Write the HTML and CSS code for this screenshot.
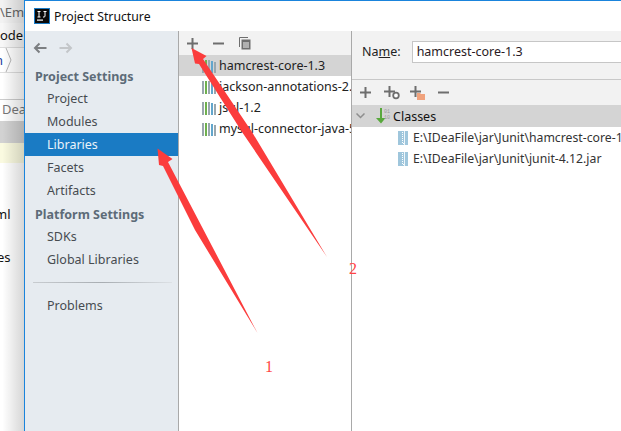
FILE: index.html
```html
<!DOCTYPE html>
<html lang="en">
<head>
<meta charset="utf-8">
<title>Project Structure</title>
<link rel="stylesheet" href="styles.css">
</head>
<body>
<svg class="defs" width="0" height="0" aria-hidden="true">
  <symbol id="lib" viewBox="0 0 14 14">
    <rect x="0" y="1" width="2" height="13" fill="#9aa7ae"/>
    <rect x="3" y="1" width="2" height="13" fill="#6fb04f"/>
    <rect x="6" y="1" width="2" height="13" fill="#9aa7ae"/>
    <rect x="9" y="2" width="2" height="12" fill="#62a6cc"/>
    <rect x="12" y="3" width="2" height="11" fill="#9aa7ae"/>
  </symbol>
  <symbol id="jar" viewBox="0 0 10 14">
    <rect x="0" y="0" width="10" height="14" fill="#9fc6dc"/>
    <path d="M5 0v1h-1v1h1v1h-1v1h1v1h-1v1h1v1h-1v1h1v1h-1v1h1v1h-1v1h1v1h1v-1h-1z" fill="#fff"/>
    <rect x="6" y="0" width="1" height="14" fill="#eef6fa"/>
  </symbol>
</svg>
<div class="page">
  <aside class="backdrop">
    <div class="bd-path">\Em</div>
    <div class="bd-menu">ode</div>
    <div class="bd-crumb"><span class="bd-n">n</span><svg class="bd-chev" width="8" height="24" viewBox="0 0 8 24"><path d="M1 0l5 12-5 12" fill="none" stroke="#b5b5b5"/></svg></div>
    <div class="bd-gap"></div>
    <div class="bd-dea">Dea</div>
    <div class="bd-gray"></div>
    <div class="bd-yellow"></div>
    <div class="bd-ml">ml</div>
    <div class="bd-es">es</div>
  </aside>
  <main class="window">
    <header class="titlebar">
      <svg class="logo" width="16" height="16" viewBox="0 0 16 16"><rect x=".5" y=".5" width="15" height="15" fill="#0a0a0a" stroke="#1a7ac4"/><rect x="3" y="11.500" width="6" height="1.200" fill="#fff"/><path d="M3.500 3.500h3M5 3.500v5.500M3.500 9h3M9.500 3.500h3M11 3.500v4.500q0 1-1 1h-1" fill="none" stroke="#fff" stroke-width="1"/></svg>
      <span class="title">Project Structure</span>
    </header>
    <div class="panes">
      <nav class="sidebar">
        <div class="navbtns">
          <svg width="14" height="12" viewBox="0 0 14 12"><path d="M13.500 6H2M6.500 1.500L2 6l4.500 4.500" fill="none" stroke="#7c7f82" stroke-width="2"/></svg>
          <svg width="14" height="12" viewBox="0 0 14 12"><path d="M0.500 6H12M7.500 1.500L12 6l-4.500 4.500" fill="none" stroke="#c3c6c9" stroke-width="2"/></svg>
        </div>
        <div class="group">Project Settings</div>
        <div class="item">Project</div>
        <div class="item">Modules</div>
        <div class="item active">Libraries</div>
        <div class="item">Facets</div>
        <div class="item">Artifacts</div>
        <div class="group">Platform Settings</div>
        <div class="item">SDKs</div>
        <div class="item">Global Libraries</div>
        <div class="sep"></div>
        <div class="item">Problems</div>
      </nav>
      <section class="middle">
        <div class="toolbar midtools">
          <svg width="11" height="11" viewBox="0 0 11 11"><path d="M5.500 0v11M0 5.500h11" stroke="#6e6e6e" stroke-width="2"/></svg>
          <svg width="11" height="11" viewBox="0 0 11 11"><path d="M0 5.500h11" stroke="#6e6e6e" stroke-width="2"/></svg>
          <svg width="12" height="13" viewBox="0 0 12 13"><path d="M0.500 10V0.500H9" fill="none" stroke="#6e6e6e"/><rect x="2.500" y="2.500" width="9" height="10" fill="#6e6e6e"/><path d="M4 6h6M4 8h6M4 10h6" stroke="#f2f2f2"/></svg>
        </div>
        <ul class="liblist">
          <li class="lib selected"><svg class="libicon"><use href="#lib"/></svg>hamcrest-core-1.3</li>
          <li class="lib"><svg class="libicon"><use href="#lib"/></svg>jackson-annotations-2.</li>
          <li class="lib"><svg class="libicon"><use href="#lib"/></svg>jsql-1.2</li>
          <li class="lib"><svg class="libicon"><use href="#lib"/></svg>mysql-connector-java-5</li>
        </ul>
      </section>
      <section class="detail">
        <div class="namerow">
          <label class="namelabel">Na<u>m</u>e:</label>
          <div class="nameinput">hamcrest-core-1.3</div>
        </div>
        <div class="toolbar dettools">
          <svg width="11" height="11" viewBox="0 0 11 11"><path d="M5.500 0v11M0 5.500h11" stroke="#6e6e6e" stroke-width="2"/></svg>
          <svg class="over" width="13" height="14" viewBox="0 0 13 14"><path d="M5.500 0v11M0 5.500h11" stroke="#6e6e6e" stroke-width="2"/><circle cx="12" cy="9.500" r="2.800" fill="#fff" stroke="#6e6e6e" stroke-width="1.800"/></svg>
          <svg width="15" height="14" viewBox="0 0 15 14"><path d="M5.500 0v11M0 5.500h11" stroke="#6e6e6e" stroke-width="2"/><path d="M7 7h3l1 1h4v6H7z" fill="#f0a27c"/></svg>
          <svg width="11" height="11" viewBox="0 0 11 11"><path d="M0 5.500h11" stroke="#6e6e6e" stroke-width="2"/></svg>
        </div>
        <div class="classes">
          <svg class="chev" width="9" height="6" viewBox="0 0 9 6"><path d="M0.500 0.500l4 4 4-4" fill="none" stroke="#8e8e8e" stroke-width="1.500"/></svg>
          <svg class="clsicon" width="16" height="16" viewBox="0 0 16 16"><path d="M4 0h2v10h3.500L5 15.500 0 10h4z" fill="#58a83c"/><text x="8" y="5" class="bits">01</text><text x="8" y="11" class="bits">10</text></svg>
          <span>Classes</span>
        </div>
        <div class="jar"><svg class="jaricon"><use href="#jar"/></svg>E:\IDeaFile\jar\Junit\hamcrest-core-1.3.jar</div>
        <div class="jar"><svg class="jaricon"><use href="#jar"/></svg>E:\IDeaFile\jar\Junit\junit-4.12.jar</div>
      </section>
    </div>
  </main>
</div>
<svg class="arrows" width="621" height="431" viewBox="0 0 621 431" aria-hidden="true">
  <path d="M157.500 148.500L172.500 159L168 162L257.500 333L195 230L163 166L159 165Z" fill="#fb3c3c"/>
  <path d="M191.500 48L206.500 56L203 59L252 132L327 257L242 132L199 64L195 63.500Z" fill="#fb3c3c"/>
</svg>
<span class="mark mark1">1</span>
<span class="mark mark2">2</span>
</body>
</html>
```
FILE: styles.css
```css
* { box-sizing: border-box; }
html, body { margin: 0; padding: 0; }
body {
  width: 621px;
  height: 431px;
  overflow: hidden;
  position: relative;
  font-family: "Noto Sans", "Open Sans", sans-serif;
  font-size: 12.500px;
  color: #3c3c3c;
  background: #fff;
}
.defs { position: absolute; }
.page { display: flex; height: 431px; }

/* background IDE sliver */
.backdrop {
  width: 24px;
  flex: none;
  display: flex;
  flex-direction: column;
  overflow: hidden;
  position: relative;
  font-size: 13px;
  color: #111;
  background: #fff;
  white-space: nowrap;
}
.backdrop::after {
  content: "";
  position: absolute;
  inset: 0;
  background: linear-gradient(90deg, rgba(0,0,0,0) 10%, rgba(0,0,0,.16));
}
.bd-path { height: 23px; padding-top: 3px; color: #666; background: #f2f2f2; }
.bd-menu { height: 24px; padding-top: 3px; background: #f7f7f7; }
.bd-crumb { height: 26px; display: flex; align-items: center; border-top: 1px solid #ddd; border-bottom: 1px solid #ddd; }
.bd-n { color: #1a3fa0; width: 3px; overflow: hidden; direction: rtl; }
.bd-chev { margin-left: 2px; }
.bd-gap { height: 26px; }
.bd-dea { height: 22px; color: #777; padding-left: 2px; border-top: 1px solid #ccc; }
.bd-gray { height: 22px; background: #d2d2d2; }
.bd-yellow { height: 20px; background: #fafae0; }
.bd-ml { margin-top: 42px; height: 43px; margin-left: -5px; }
.bd-es { height: 20px; margin-left: -3px; }

/* window */
.window {
  flex: 1;
  min-width: 0;
  display: flex;
  flex-direction: column;
  border-left: 1px solid #1a84dc;
  border-top: 1px solid #1a84dc;
  background: #fff;
}
.titlebar {
  height: 30px;
  flex: none;
  display: flex;
  align-items: center;
  gap: 4px;
  padding-left: 9px;
  background: #fff;
  color: #111;
  font-size: 12.250px;
}
.panes { flex: 1; min-height: 0; display: flex; }

.sidebar {
  width: 154px;
  flex: none;
  background: #e6ebf0;
  border-right: 1px solid #a9a9a9;
  font-size: 12.500px;
}
.navbtns { height: 33px; display: flex; align-items: center; gap: 12px; padding-left: 8px; }
.group {
  height: 23px;
  line-height: 25px;
  padding-left: 10px;
  font-weight: 700;
  color: #5d6b78;
}
.item { height: 23px; line-height: 23px; padding-left: 22px; color: #474b50; }
.item.active { background: #1a7bc4; color: #e9f2f9; }
.sep { height: 23px; margin: 0 6px 0 8px; position: relative; }
.sep::after {
  content: "";
  position: absolute;
  left: 0; right: 0; top: 11px;
  height: 1px;
  background: linear-gradient(90deg, #c8ccd0, #a8adb2 50%, #dde1e5);
}

.toolbar { display: flex; align-items: center; background: #f2f2f2; }
.middle {
  width: 173px;
  flex: none;
  overflow: hidden;
  white-space: nowrap;
  border-right: 1px solid #a9a9a9;
}
.midtools { height: 24px; gap: 15px; padding-left: 8px; }
.liblist { list-style: none; margin: 0; padding: 0; }
.lib { height: 21px; display: flex; align-items: center; gap: 3px; padding-left: 23px; color: #222; }
.lib.selected { background: #d4d4d4; }
.libicon { width: 14px; height: 14px; flex: none; }

.detail { flex: 1; min-width: 0; overflow: hidden; white-space: nowrap; }
.namerow {
  height: 49px;
  display: flex;
  align-items: flex-start;
  padding: 10px 0 0 10px;
  gap: 11px;
  background: #f2f2f2;
  border-bottom: 1px solid #c8c8c8;
}
.namelabel { line-height: 22px; color: #222; }
.nameinput {
  flex: 1;
  height: 22px;
  line-height: 20px;
  padding-left: 4px;
  background: #fff;
  border: 1px solid #c6c6c6;
  border-right: 0;
  color: #2a1a24;
}
.dettools { height: 25px; gap: 13px; padding-left: 8px; }
.over { overflow: visible; }
.classes {
  height: 22px;
  display: flex;
  align-items: center;
  background: #d4d4d4;
  color: #111;
  padding-left: 4px;
}
.chev { margin-right: 11px; }
.clsicon { margin-right: 1px; }
.bits { font-family: "Liberation Mono", monospace; font-size: 5px; fill: #9a9a9a; }
.jar { height: 21px; display: flex; align-items: center; gap: 5px; padding-left: 46px; color: #333; font-size: 12.250px; }
.jaricon { width: 10px; height: 14px; flex: none; }

/* annotations drawn over the screenshot */
.arrows { position: absolute; left: 0; top: 0; pointer-events: none; }
.mark {
  position: absolute;
  font-family: "Liberation Serif", serif;
  font-size: 16px;
  line-height: 18px;
  color: #f44;
}
.mark1 { left: 265px; top: 358px; }
.mark2 { left: 349px; top: 260px; }
```
